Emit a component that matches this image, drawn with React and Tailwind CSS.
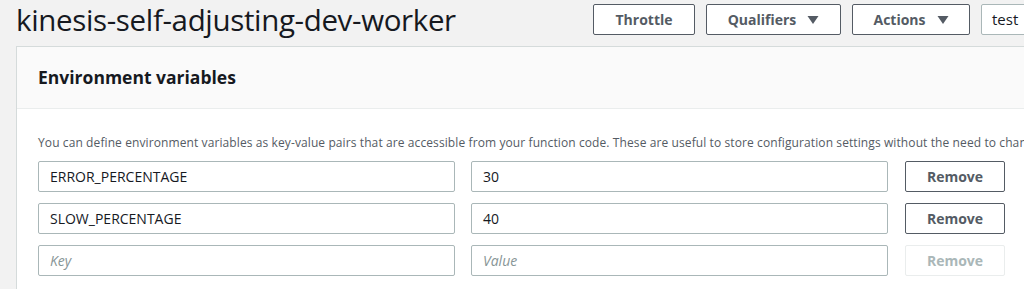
import React from "react";

const font = { fontFamily: '"Open Sans", "Noto Sans", sans-serif' };

function Btn({ children, className = "" }) {
  return (
    <button
      className={
        "h-[31px] border border-[#545b64] rounded-[2px] bg-white text-[14px] font-bold text-[#545b64] flex items-center justify-center shrink-0 " +
        className
      }
    >
      {children}
    </button>
  );
}

function Caret() {
  return (
    <svg width="12" height="10" viewBox="0 0 12 10" className="ml-[11px]">
      <path d="M0.5 1 L11.5 1 L6 9 Z" fill="#545b64" />
    </svg>
  );
}

function Field({ value, placeholder, className = "" }) {
  return (
    <div
      className={
        "h-[31px] border border-[#aab7b8] rounded-[2px] bg-white flex items-center px-[11px] text-[14px] shrink-0 " +
        className
      }
    >
      {value ? (
        <span className="text-[#16191f]">{value}</span>
      ) : (
        <span className="text-[#879596] italic">{placeholder}</span>
      )}
    </div>
  );
}

function Row({ k, v, disabled }) {
  return (
    <div className="flex items-center">
      <Field value={k} placeholder="Key" className="w-[417px]" />
      <Field value={v} placeholder="Value" className="w-[417px] ml-[16px]" />
      <button
        className={
          "ml-[17px] w-[100px] h-[31px] rounded-[2px] border bg-white text-[14px] font-bold flex items-center justify-center shrink-0 " +
          (disabled
            ? "border-[#eaeded] text-[#aab7b8]"
            : "border-[#545b64] text-[#545b64]")
        }
      >
        Remove
      </button>
    </div>
  );
}

export default function App() {
  return (
    <div className="w-[1024px] h-[289px] overflow-hidden bg-[#f2f2f2]" style={font}>
      <div className="w-[1100px] pl-[16px]">
        <div className="flex items-start h-[46px]">
          <div className="w-[577px] shrink-0">
            <h1 className="text-[29.5px] leading-[40px] text-[#16191f] font-normal tracking-[-0.35px] whitespace-nowrap">
              kinesis-self-adjusting-dev-worker
            </h1>
          </div>
          <div className="flex gap-[11px] mt-[4px]">
            <Btn className="w-[102px]">Throttle</Btn>
            <Btn className="w-[135px]">
              Qualifiers
              <Caret />
            </Btn>
            <Btn className="w-[118px]">
              Actions
              <Caret />
            </Btn>
            <div className="h-[31px] w-[120px] border border-[#aab7b8] rounded-[2px] bg-white flex items-center px-[10px] text-[15px] text-[#16191f]">
              test
            </div>
          </div>
        </div>
        <div className="bg-white border-l border-t border-[#d5dbdb]">
          <div className="h-[62px] bg-[#fafafa] border-b border-[#eaeded] flex items-center pl-[21px]">
            <h2 className="text-[17.5px] font-bold text-[#16191f]">Environment variables</h2>
          </div>
          <div className="pl-[21px] pt-[24px] pb-[20px]">
            <p className="text-[12px] leading-[20px] tracking-[0.1px] text-[#545b64] whitespace-nowrap mb-[8px]">
              You can define environment variables as key-value pairs that are accessible from your function code. These are useful to store configuration settings without the need to change function code.
            </p>
            <div className="flex flex-col gap-[11px]">
              <Row k="ERROR_PERCENTAGE" v="30" />
              <Row k="SLOW_PERCENTAGE" v="40" />
              <Row disabled />
            </div>
          </div>
        </div>
      </div>
    </div>
  );
}
